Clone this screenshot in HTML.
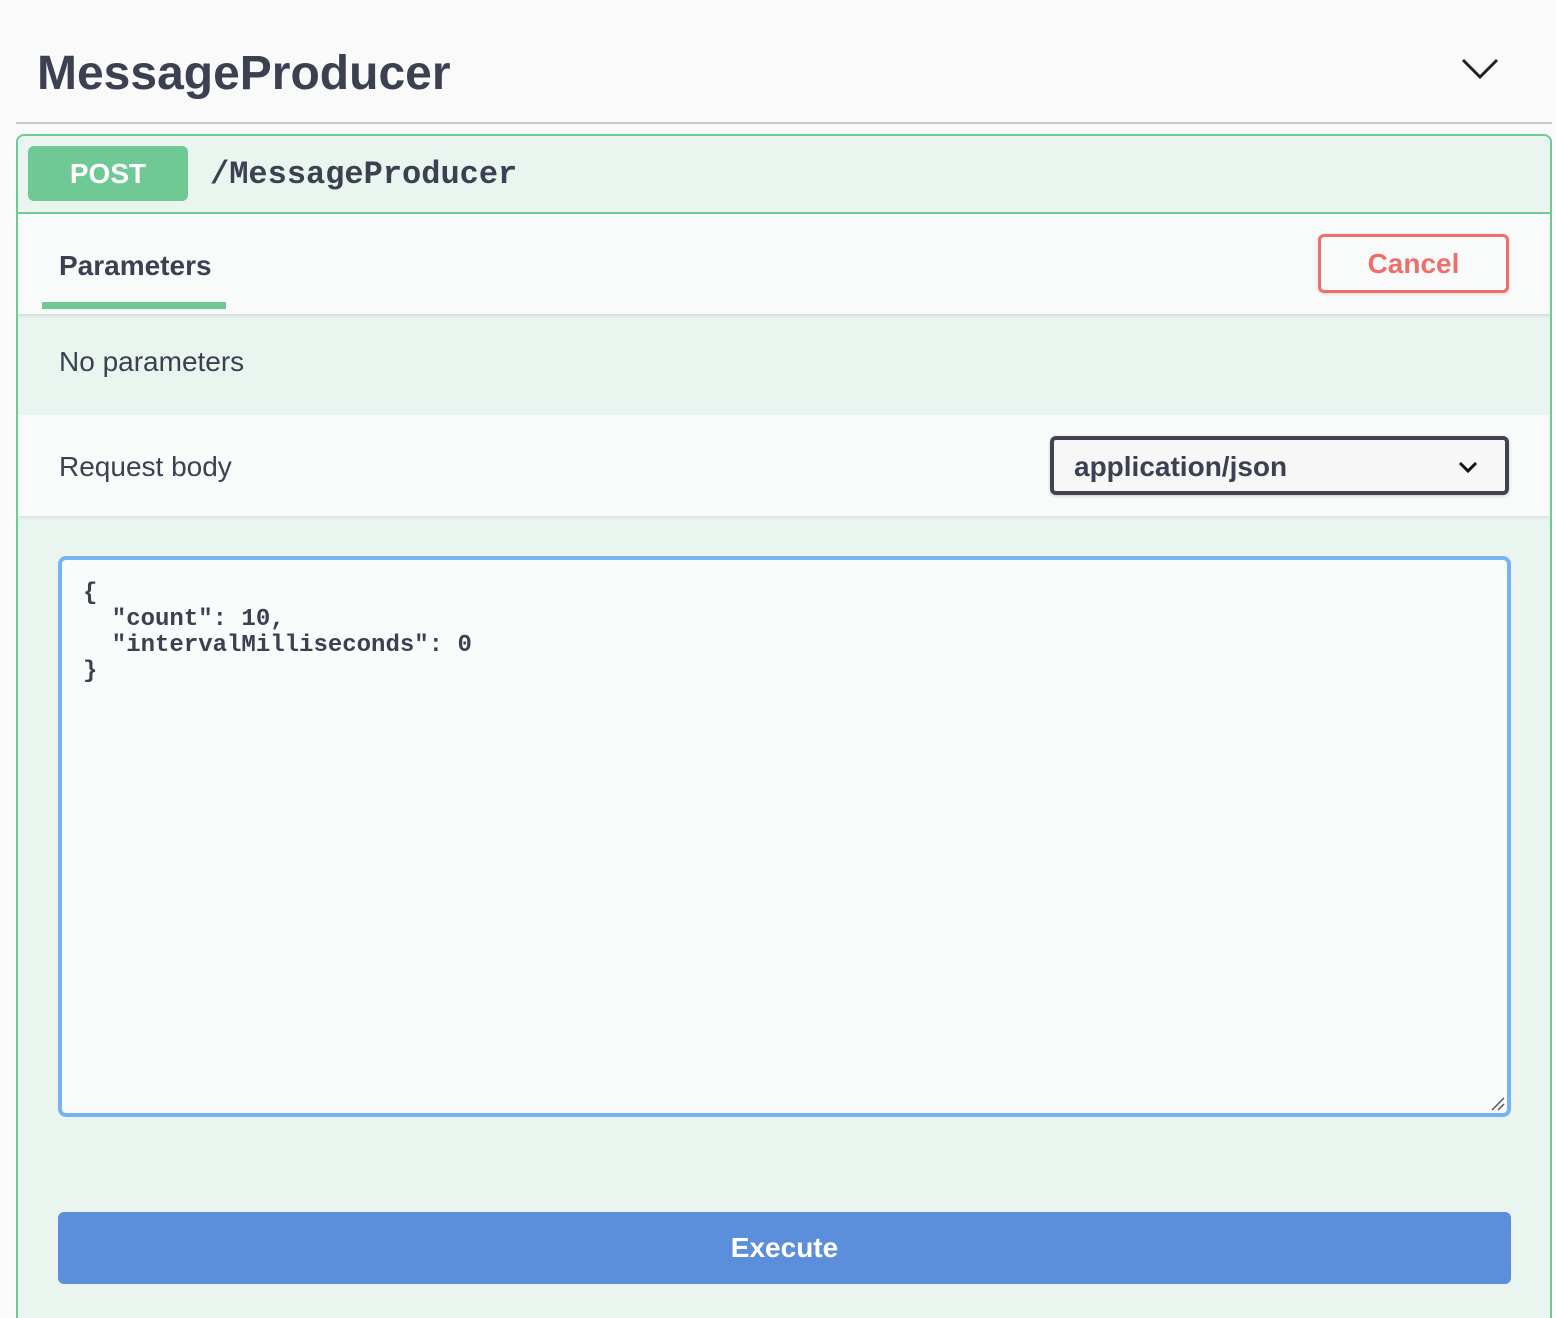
<!DOCTYPE html>
<html><head><meta charset="utf-8"><style>
*{box-sizing:border-box;margin:0;padding:0}
html,body{width:1556px;height:1318px;overflow:hidden}
body{background:#fafafa;font-family:"Liberation Sans",sans-serif;color:#3b4151;position:relative}
.abs{position:absolute}
</style></head><body>
<div class="abs" style="left:37px;top:44px;font-size:48px;font-weight:bold;line-height:60px;color:#3b4151">MessageProducer</div>
<svg class="abs" style="left:1460px;top:56px" width="40" height="26" viewBox="0 0 40 26"><path d="M3 4 L20 21 L37 4" fill="none" stroke="#222" stroke-width="3"/></svg>
<div class="abs" style="left:16px;top:122px;width:1536px;height:2px;background:#c8c9cc"></div>
<div class="abs" style="left:16px;top:134px;width:1536px;height:1184px;border:2px solid #6fcb94;border-bottom:none;border-radius:8px 8px 0 0;background:#ebf5f0;overflow:hidden">
  <div class="abs" style="left:10px;top:10px;width:160px;height:55px;background:#6fc995;border-radius:6px;color:#fff;font-weight:bold;font-size:28px;text-align:center;line-height:55px">POST</div>
  <div class="abs" style="left:192px;top:19px;font-family:'Liberation Mono',monospace;font-weight:bold;font-size:32px;line-height:40px;color:#3b4151">/MessageProducer</div>
  <div class="abs" style="left:0;top:76px;width:100%;height:2px;background:#6fcb94"></div>
  <div class="abs" style="left:0;top:78px;width:100%;height:100px;background:#f9fbfb;box-shadow:0 2px 3px rgba(0,0,0,.1)">
    <div class="abs" style="left:41px;top:34px;font-size:28px;font-weight:bold;line-height:36px">Parameters</div>
    <div class="abs" style="left:24px;top:88px;width:184px;height:7px;background:#6fc995"></div>
    <div class="abs" style="left:1300px;top:20px;width:191px;height:59px;border:3px solid #ef6e6a;border-radius:6px;color:#ef6e6a;font-weight:bold;font-size:28px;text-align:center;line-height:53px;box-shadow:0 1px 3px rgba(0,0,0,.15)">Cancel</div>
  </div>
  <div class="abs" style="left:41px;top:208px;font-size:28px;line-height:36px">No parameters</div>
  <div class="abs" style="left:0;top:279px;width:100%;height:101px;background:#f9fbfb;box-shadow:0 2px 3px rgba(0,0,0,.08)">
    <div class="abs" style="left:41px;top:34px;font-size:28px;line-height:36px">Request body</div>
    <div class="abs" style="left:1032px;top:21px;width:459px;height:59px;border:4px solid #41444e;border-radius:6px;background:#f7f7f7;box-shadow:0 1px 3px rgba(0,0,0,.2)">
      <div class="abs" style="left:20px;top:10px;font-size:28px;font-weight:bold;line-height:34px">application/json</div>
      <svg class="abs" style="left:403px;top:20px" width="22" height="14" viewBox="0 0 22 14"><path d="M3 3 L11 11 L19 3" fill="none" stroke="#111" stroke-width="3"/></svg>
    </div>
  </div>
  <div class="abs" style="left:40px;top:420px;width:1453px;height:561px;border:4px solid #77b2f3;border-radius:8px;background:#fafcfc">
    <pre style="position:absolute;left:21px;top:21px;font-family:'Liberation Mono',monospace;font-weight:bold;font-size:24px;line-height:26px;color:#3b4151">{
  "count": 10,
  "intervalMilliseconds": 0
}</pre>
    <svg class="abs" style="right:2px;bottom:2px" width="16" height="16"><path d="M15 3 L3 15 M15 9 L9 15" stroke="#555" stroke-width="1.5"/></svg>
  </div>
  <div class="abs" style="left:40px;top:1076px;width:1453px;height:72px;background:#5b8fdb;border-radius:6px;color:#fff;font-weight:bold;font-size:28px;text-align:center;line-height:72px">Execute</div>
</div>
</body></html>
